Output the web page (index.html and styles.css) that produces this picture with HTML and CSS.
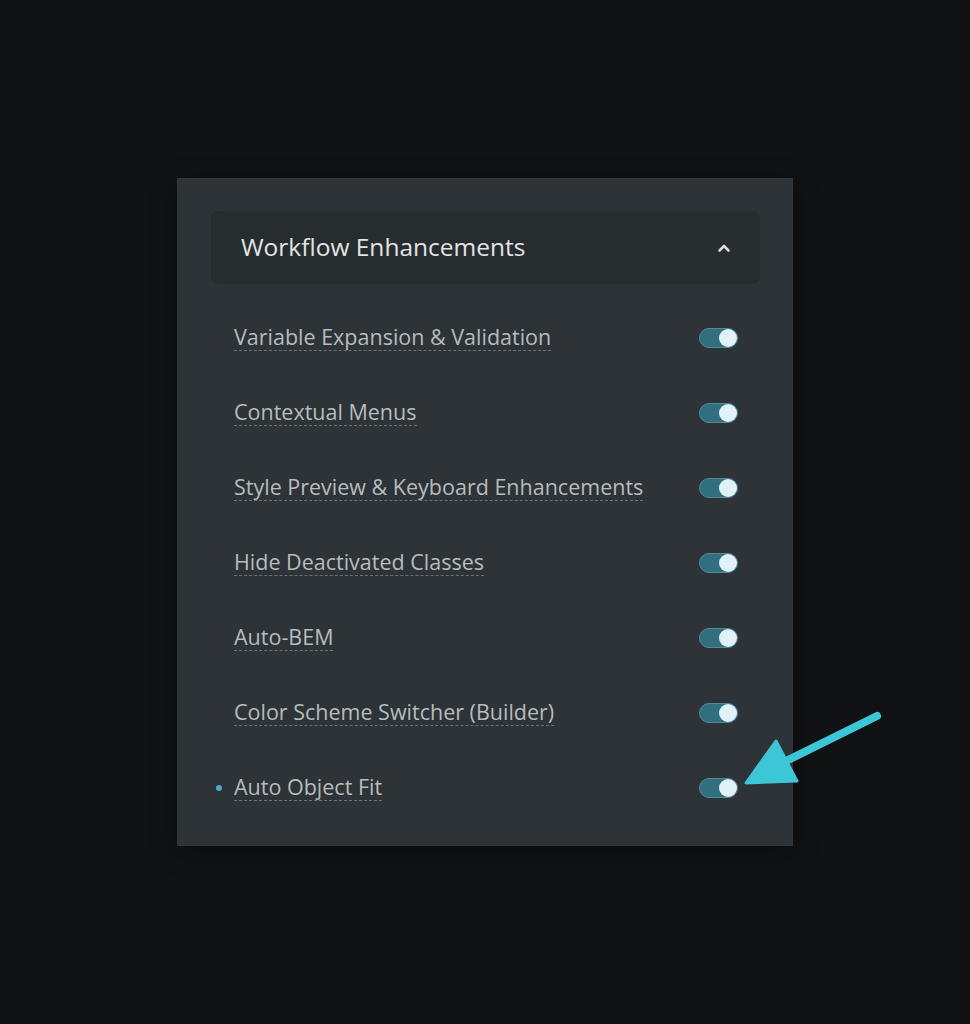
FILE: index.html
```html
<!DOCTYPE html>
<html>
<head>
<meta charset="utf-8">
<link rel="stylesheet" href="styles.css">
</head>
<body>
<div class="stage">
  <div class="panel">
    <div class="panel-head">
      <span class="panel-title">Workflow Enhancements</span>
      <svg class="chevron" width="14" height="10" viewBox="0 0 14 10"><path d="M2.5 7.5 L7 3 L11.5 7.5" fill="none" stroke="#d8dadb" stroke-width="2.6" stroke-linecap="round" stroke-linejoin="round"/></svg>
    </div>
    <ul class="rows">
      <li class="row"><span class="label">Variable Expansion &amp; Validation</span><span class="toggle"><span class="knob"></span></span></li>
      <li class="row"><span class="label">Contextual Menus</span><span class="toggle"><span class="knob"></span></span></li>
      <li class="row"><span class="label">Style Preview &amp; Keyboard Enhancements</span><span class="toggle"><span class="knob"></span></span></li>
      <li class="row"><span class="label">Hide Deactivated Classes</span><span class="toggle"><span class="knob"></span></span></li>
      <li class="row"><span class="label">Auto-BEM</span><span class="toggle"><span class="knob"></span></span></li>
      <li class="row"><span class="label">Color Scheme Switcher (Builder)</span><span class="toggle"><span class="knob"></span></span></li>
      <li class="row row-new"><span class="label">Auto Object Fit</span><span class="toggle"><span class="knob"></span></span></li>
    </ul>
  </div>
  <svg class="arrow" width="970" height="1024" viewBox="0 0 970 1024">
    <line x1="877" y1="716" x2="784" y2="762" stroke="#3cc6d7" stroke-width="8" stroke-linecap="round"/>
    <polygon points="746,783 776,741 797,781" fill="#3cc6d7" stroke="#3cc6d7" stroke-width="3" stroke-linejoin="round"/>
  </svg>
</div>
</body>
</html>
```
FILE: styles.css
```css
html, body {
  margin: 0;
  padding: 0;
  background: #111213;
}
body {
  font-family: "Open Sans", "Lato", sans-serif;
}
.stage {
  position: relative;
  width: 970px;
  height: 1024px;
  padding-top: 178px;
  box-sizing: border-box;
}
.panel {
  margin-left: 177px;
  width: 616px;
  box-sizing: border-box;
  background: #2d3336;
  border: 1px solid #30373a;
  padding: 32px 32px 20px 33px;
  box-shadow: 0 6px 24px rgba(0,0,0,0.35);
}
.panel-head {
  height: 73px;
  background: #272c2f;
  border-radius: 7px;
  display: flex;
  align-items: center;
  justify-content: space-between;
  padding: 0 29px 0 30px;
  box-sizing: border-box;
}
.panel-title {
  font-size: 24.5px;
  color: #e2e4e5;
  position: relative;
  top: -1px;
}
.chevron {
  display: block;
}
.rows {
  list-style: none;
  margin: 16px 0 0;
  padding: 0 23px;
}
.row {
  height: 75px;
  display: flex;
  align-items: center;
  justify-content: space-between;
  position: relative;
}
.label {
  font-size: 21.5px;
  color: #b7bcbe;
  border-bottom: 1px dashed #6b7276;
  padding-bottom: 0;
  line-height: 26px;
}
.row-new::before {
  content: "";
  position: absolute;
  left: -18px;
  top: 35px;
  width: 6px;
  height: 6px;
  border-radius: 50%;
  background: #4ba9cf;
}
.toggle {
  width: 39px;
  height: 20px;
  border-radius: 10px;
  background: #316f7e;
  border: 1px solid #54889a;
  box-sizing: border-box;
  position: relative;
  margin-right: -1px;
}
.knob {
  position: absolute;
  right: 0;
  top: 0;
  width: 18px;
  height: 18px;
  border-radius: 50%;
  background: #e0f1f8;
}
.arrow {
  position: absolute;
  left: 0;
  top: 0;
  pointer-events: none;
}
```
